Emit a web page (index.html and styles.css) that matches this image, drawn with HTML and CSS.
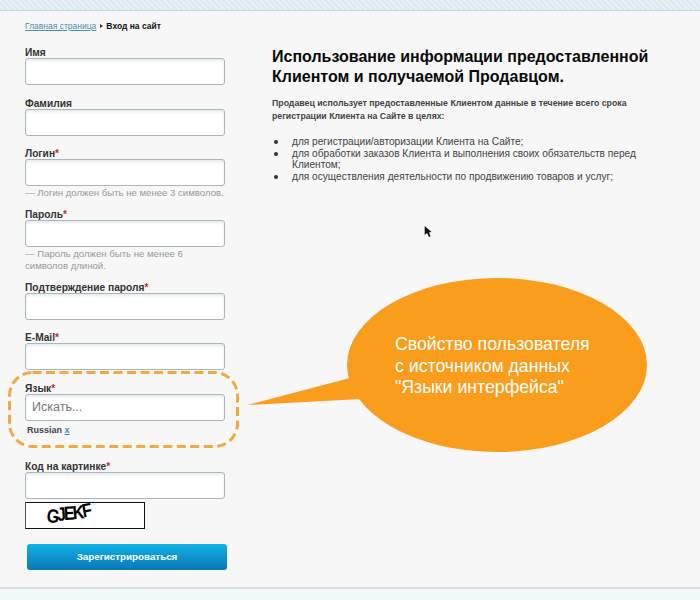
FILE: index.html
```html
<!DOCTYPE html>
<html lang="ru">
<head>
<meta charset="utf-8">
<title>Вход на сайт</title>
<link rel="stylesheet" href="styles.css">
</head>
<body>
<div class="stripe"></div>
<main class="main">
  <div class="left">
    <nav class="crumbs"><a href="#">Главная страница</a><span class="arrow"></span><b>Вход на сайт</b></nav>
    <form class="form">
      <div class="field f1"><label>Имя</label><div class="input"></div></div>
      <div class="field f2"><label>Фамилия</label><div class="input"></div></div>
      <div class="field f3"><label>Логин<i>*</i></label><div class="input"></div><p class="hint">— Логин должен быть не менее 3 символов.</p></div>
      <div class="field f4"><label>Пароль<i>*</i></label><div class="input"></div><p class="hint">— Пароль должен быть не менее 6 символов длиной.</p></div>
      <div class="field f5"><label>Подтверждение пароля<i>*</i></label><div class="input"></div></div>
      <div class="field f6"><label>E-Mail<i>*</i></label><div class="input"></div></div>
      <div class="field f7"><label>Язык<i>*</i></label><div class="input search">Искать...</div><div class="tag">Russian <a href="#">x</a></div></div>
      <div class="field f8"><label>Код на картинке<i>*</i></label><div class="input"></div>
        <div class="captcha"><span class="c1">G</span><span class="c2">J</span><span class="c3">E</span><span class="c4">K</span><span class="c5">F</span></div>
      </div>
      <div class="button">Зарегистрироваться</div>
    </form>
  </div>
  <article class="right">
    <h1>Использование информации предоставленной Клиентом и получаемой Продавцом.</h1>
    <p class="lead">Продавец использует предоставленные Клиентом данные в течение всего срока регистрации Клиента на Сайте в целях:</p>
    <ul>
      <li>для регистрации/авторизации Клиента на Сайте;</li>
      <li>для обработки заказов Клиента и выполнения своих обязательств перед Клиентом;</li>
      <li>для осуществления деятельности по продвижению товаров и услуг;</li>
    </ul>
  </article>
  <svg class="overlay" width="700" height="578" viewBox="0 11 700 578" aria-hidden="true">
    <rect x="9.500" y="372.500" width="228" height="74" rx="23" fill="none" stroke="#f3a840" stroke-width="3" stroke-dasharray="9 4.500"/>
    <ellipse cx="497" cy="365" rx="150" ry="87" fill="#fb9d1c"/>
    <path d="M247 405 L350 378 L361 399 Z" fill="#fb9d1c"/>
    <path d="M424.700 226 V235 L427 233 L429 237 L430.500 236.200 L429 232.500 L431.500 232 Z" fill="#111"/>
  </svg>
  <div class="bubble">Свойство пользователя<br>с источником данных<br>"Языки интерфейса"</div>
</main>
<div class="foot"></div>
</body>
</html>
```
FILE: styles.css
```css
* { box-sizing: border-box; }
html, body { margin: 0; padding: 0; }
body {
  width: 700px;
  height: 600px;
  overflow: hidden;
  background: #f1fafa;
  font-family: "Liberation Sans", Arial, sans-serif;
  color: #333;
}
.stripe {
  height: 11px;
  background: repeating-linear-gradient(45deg, #dbe9f0 0 2px, #e6f0f5 2px 4px);
  border-bottom: 1px solid #c3d3da;
}
.main {
  position: relative;
  display: flex;
  height: 578px;
  background: #f7f7f7;
  border-bottom: 2px solid #d6dfe4;
}
.left { width: 247px; padding: 9px 0 0 25px; flex: none; }
.crumbs { font-size: 8.500px; line-height: 12px; color: #111; display: flex; align-items: center; }
.crumbs a { color: #4a8fae; text-decoration: underline; }
.crumbs b { color: #111; }
.arrow {
  width: 0; height: 0; margin: 0 3px 0 4px;
  border-left: 3px solid #333;
  border-top: 2px solid transparent;
  border-bottom: 2px solid transparent;
}
.form { margin-top: 14px; }
.field label { display: block; font-size: 10.200px; line-height: 14px; margin-bottom: -2px; font-weight: bold; color: #333; }
.field i { color: #d3232e; font-style: normal; font-size: 10px; }
.input {
  width: 200px;
  height: 27px;
  background: #fff;
  border: 1px solid #a9b6bd;
  border-radius: 3px;
  box-shadow: inset 0 2px 3px #e6ecef;
}
.hint { margin: 1px 0 0; width: 200px; font-size: 9.600px; line-height: 12px; color: #999; }
.f2 { margin-top: 12px; }
.f3 { margin-top: 11px; }
.f4 { margin-top: 9px; }
.f5 { margin-top: 9px; }
.f6 { margin-top: 11px; }
.f7 { margin-top: 12px; }
.f8 { margin-top: 24px; }
.search { font-size: 12.500px; line-height: 25px; padding-left: 6px; color: #777; }
.tag { margin: 3px 0 0 2px; font-size: 9px; line-height: 12px; font-weight: bold; color: #3c4650; }
.tag a { color: #2b8fd0; }
.captcha {
  display: flex;
  width: 120px;
  height: 27px;
  margin-top: 3px;
  padding-left: 21px;
  background: #fff;
  border: 1px solid #111;
  border-left: 1px solid #555;
  font-family: "Liberation Sans", sans-serif;
  font-weight: bold;
  font-size: 16px;
  line-height: 22px;
  color: #000;
}
.captcha span { display: block; margin-right: -2px; }
.c1 { transform: rotate(8deg) translateY(3px) scaleY(1.2); }
.c2 { transform: rotate(-5deg) translateY(1px) scaleY(1.2); }
.c3 { transform: rotate(-3deg) scaleY(1.2); }
.c4 { transform: rotate(-5deg) translateY(-1px) scaleY(1.2); }
.c5 { transform: rotate(-10deg) translateY(-3px) scaleY(1.200); }
.button {
  width: 200px;
  height: 26px;
  margin: 15px 0 0 2px;
  border-radius: 3px;
  background: linear-gradient(#10b2e6, #0a78b6);
  color: #fff;
  font-size: 9.800px;
  font-weight: bold;
  line-height: 26px;
  text-align: center;
}
.right { width: 410px; padding: 36px 0 0 25px; color: #444; }
h1 { margin: 0; font-size: 16px; line-height: 20px; font-weight: bold; color: #0a0a0a; }
.lead { margin: 10px 0 0; font-size: 8.750px; line-height: 13px; font-weight: bold; color: #444; }
ul { margin: 13px 0 0; padding: 0 0 0 20px; list-style: none; font-size: 10.150px; line-height: 11.500px; color: #444; }
li { position: relative; }
li::before {
  content: "";
  position: absolute;
  left: -18px;
  top: 4px;
  width: 4px;
  height: 4px;
  border-radius: 50%;
  background: #333;
}
.overlay { position: absolute; left: 0; top: 0; pointer-events: none; }
.bubble {
  position: absolute;
  left: 395px;
  top: 323px;
  font-size: 17.700px;
  line-height: 21.500px;
  color: #fff;
  white-space: nowrap;
}
.foot { height: 10px; }
```
